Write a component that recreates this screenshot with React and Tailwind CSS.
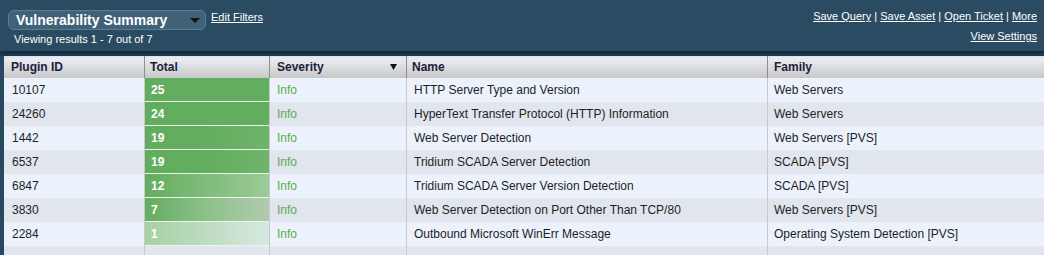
import React from "react";

const rows = [
  { id: "10107", total: 25, name: "HTTP Server Type and Version", family: "Web Servers", bar: "bg-[#62ad5e]", even: false },
  { id: "24260", total: 24, name: "HyperText Transfer Protocol (HTTP) Information", family: "Web Servers", bar: "bg-[#62ad5e]", even: true },
  { id: "1442", total: 19, name: "Web Server Detection", family: "Web Servers [PVS]", bar: "bg-[linear-gradient(to_right,#62ad5e_45%,#6fb46b)]", even: false },
  { id: "6537", total: 19, name: "Tridium SCADA Server Detection", family: "SCADA [PVS]", bar: "bg-[linear-gradient(to_right,#62ad5e_45%,#6fb46b)]", even: true },
  { id: "6847", total: 12, name: "Tridium SCADA Server Version Detection", family: "SCADA [PVS]", bar: "bg-[linear-gradient(to_right,#63ad5f,#9ccb97)]", even: false },
  { id: "3830", total: 7, name: "Web Server Detection on Port Other Than TCP/80", family: "Web Servers [PVS]", bar: "bg-[linear-gradient(to_right,#63ad5f,#8fc08b_50%,#afcbae)]", even: true },
  { id: "2284", total: 1, name: "Outbound Microsoft WinErr Message", family: "Operating System Detection [PVS]", bar: "bg-[linear-gradient(to_right,#a6d1a2,#d6e8e0)]", even: false },
];

export default function App() {
  return (
    <div className="w-[1044px] h-[255px] overflow-hidden bg-[#284862] font-['Liberation_Sans',Arial,sans-serif]">
      {/* top toolbar */}
      <div className="h-[51px] bg-[#2b4b63] shadow-[0_3px_4px_rgba(10,25,40,0.55)] relative z-10 flex justify-between">
        <div className="pl-[8px] pt-[10px]">
          <div className="flex items-start">
            <div className="w-[198px] h-[20px] rounded-[6px] bg-[#3f6279] border border-[#5b7d92] flex items-center justify-between pl-[7px] pr-[5px]">
              <span className="text-white font-bold text-[14px] leading-none">Vulnerability Summary</span>
              <svg width="10" height="6" viewBox="0 0 10 6" className="mt-[2px]">
                <polygon points="0,0 10,0 5,5" fill="#111" />
              </svg>
            </div>
            <a className="ml-[5px] mt-[1px] text-white text-[11px] leading-[13px] underline">Edit Filters</a>
          </div>
          <div className="pl-[6px] mt-[3px] text-white text-[11px] leading-[13px]">Viewing results 1 - 7 out of 7</div>
        </div>
        <div className="pr-[7px] pt-[10px] text-right text-white text-[11px] leading-[13px]">
          <div>
            <a className="underline">Save Query</a> | <a className="underline">Save Asset</a> |{" "}
            <a className="underline">Open Ticket</a> | <a className="underline">More</a>
          </div>
          <div className="mt-[7px]">
            <a className="underline">View Settings</a>
          </div>
        </div>
      </div>
      <div className="h-[5px] bg-[#213e56]" />

      {/* table */}
      <div className="pl-[4px]">
        {/* header */}
        <div className="flex h-[22px] bg-gradient-to-b from-[#eff2f9] to-[#c8c8c8] text-[12px] font-bold text-[#1d1d3a]">
          <div className="w-[141px] border-r border-[#8f8f8f] flex items-center pl-[7px]">Plugin ID</div>
          <div className="w-[125px] border-r border-[#8f8f8f] flex items-center pl-[5px]">Total</div>
          <div className="w-[137px] border-r border-[#8f8f8f] flex items-center justify-between pl-[7px] pr-[9px]">
            <span>Severity</span>
            <svg width="7" height="6" viewBox="0 0 7 6">
              <polygon points="0,0 7,0 3.5,6" fill="#111" />
            </svg>
          </div>
          <div className="w-[361px] border-r border-[#8f8f8f] flex items-center pl-[5px]">Name</div>
          <div className="flex-1 flex items-center pl-[6px]">Family</div>
        </div>

        {rows.map((r) => (
          <div
            key={r.id}
            className={`flex h-[24px] text-[12px] text-[#1e1e1e] ${r.even ? "bg-[#e1e5ed]" : "bg-[#ecf2fc]"}`}
          >
            <div className="w-[141px] border-r border-[#c6c9ce] flex items-center pl-[8px]">{r.id}</div>
            <div className="w-[125px] border-r border-[#c6c9ce] bg-[#eef3ef]">
              <div className={`h-[23px] ${r.bar} flex items-center pl-[6px] text-white font-bold`}>{r.total}</div>
            </div>
            <div className="w-[137px] border-r border-[#c6c9ce] flex items-center pl-[7px] text-[#5aac4f]">Info</div>
            <div className="w-[361px] border-r border-[#c6c9ce] flex items-center pl-[7px]">{r.name}</div>
            <div className="flex-1 flex items-center pl-[6px]">{r.family}</div>
          </div>
        ))}
        <div className="flex h-[24px] bg-[#e1e5ed]">
          <div className="w-[141px] border-r border-[#c6c9ce]" />
          <div className="w-[125px] border-r border-[#c6c9ce]" />
          <div className="w-[137px] border-r border-[#c6c9ce]" />
          <div className="w-[361px] border-r border-[#c6c9ce]" />
          <div className="flex-1" />
        </div>
      </div>
    </div>
  );
}
